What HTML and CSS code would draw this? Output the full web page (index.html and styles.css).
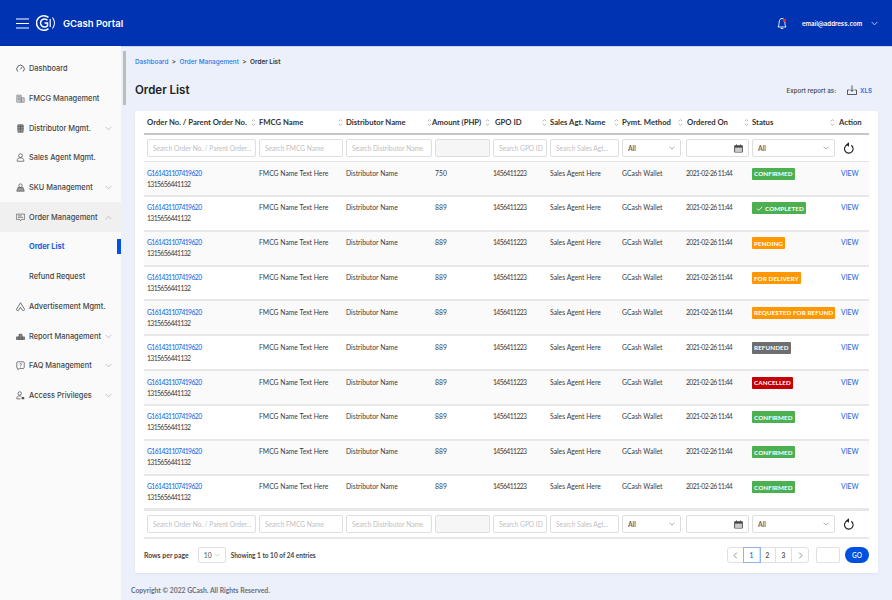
FILE: index.html
```html
<!DOCTYPE html>
<html lang="en">
<head>
<meta charset="utf-8">
<title>Order List</title>
<link rel="stylesheet" href="styles.css">
</head>
<body>
<svg class="defs" aria-hidden="true">
  <symbol id="sort" viewBox="0 0 6 10"><path d="M1 3.500 3 1.500 5 3.500M1 6.500 3 8.500 5 6.500" fill="none" stroke="#aaa" stroke-width="1"/></symbol>
  <symbol id="down" viewBox="0 0 8 5"><path d="M.7.7 4 4 7.300.7" fill="none" stroke="currentColor" stroke-width=".8"/></symbol>
  <symbol id="cal" viewBox="0 0 10 10"><path d="M1 1.500h8a.8.8 0 0 1 .8.8v6.400a.8.8 0 0 1-.8.8H1a.8.8 0 0 1-.8-.8V2.300a.8.8 0 0 1 .8-.8Z" fill="#444"/><rect x="1.200" y="4" width="7.600" height="4.800" fill="#ccc"/><path d="M2.800.5v1.500M7.200.5v1.500" stroke="#444"/></symbol>
  <symbol id="refresh" viewBox="0 0 10 12"><path d="M3.300 2.800A4.300 4.300 0 1 0 7.300 3.300" fill="none" stroke="#222" stroke-width="1.100"/><path d="M5 .3V4.700L2 2.500Z" fill="#222"/></symbol>
</svg>
<header class="topbar">
  <div class="brand">
    <svg class="burger" viewBox="0 0 13 11"><path d="M0 1h13M0 5.500h13M0 10h13" stroke="#fff" stroke-width="1.200"/></svg>
    <svg class="logo" viewBox="0 0 19 18"><path d="M12.500 3.400A7.300 7.300 0 1 0 12.500 14.600" fill="none" stroke="#fff" stroke-width="1.500"/><path d="M11.500 6.300A4 4 0 1 0 11.500 11.700V9H8.500" fill="none" stroke="#fff" stroke-width="1.500"/><path d="M14.200 5v8M16.500 3.500a9 9 0 0 1 0 11" fill="none" stroke="#fff" stroke-width="1.200"/></svg>
    <span class="brand-name">GCash Portal</span>
  </div>
  <div class="user">
    <span class="bell">
      <svg viewBox="0 0 10 13"><path d="M1 10c1-1.500 1-3 1.200-5C2.500 2.500 3.500 1.500 5 1.500S7.500 2.500 7.800 5C8 7 8 8.500 9 10ZM3.800 11.500h2.400" fill="none" stroke="#fff" stroke-width=".9"/></svg>
      <i class="bell-dot"></i>
    </span>
    <span class="email">email@address.com</span>
    <svg class="user-chev"><use href="#down"/></svg>
  </div>
</header>
<div class="shell">
  <nav class="side">
    <a class="nav"><svg viewBox="0 0 12 12"><path d="M2.300 10A5 5 0 1 1 9.700 10M6 7l2-3" fill="none" stroke="#444" stroke-width="1.100"/></svg><span>Dashboard</span></a>
    <a class="nav"><svg viewBox="0 0 12 12"><path d="M1 1.500h6V11H1ZM7 5h4v6H7ZM2.500 3.500h3M2.500 5.500h3M2.500 7.500h3" fill="#ccc" stroke="#777" stroke-width=".8"/></svg><span>FMCG Management</span></a>
    <a class="nav"><svg viewBox="0 0 12 12"><path d="M2.500 1h7v10h-7ZM1.500 3.500h9M1.500 6.500h9M6 1v10" fill="#999" stroke="#555" stroke-width=".9"/></svg><span>Distributor Mgmt.</span><svg class="chev"><use href="#down"/></svg></a>
    <a class="nav"><svg viewBox="0 0 12 12"><circle cx="6" cy="3.500" r="2.500" fill="none" stroke="#555"/><path d="M1.500 11c0-4 2-4.500 4.500-4.500s4.500.5 4.500 4.500Z" fill="none" stroke="#555"/></svg><span>Sales Agent Mgmt.</span></a>
    <a class="nav"><svg viewBox="0 0 12 12"><path d="M1 11 2.500 6h7l1.500 5Z" fill="#999" stroke="#555" stroke-width=".8"/><circle cx="6" cy="3.500" r="2.300" fill="none" stroke="#555"/></svg><span>SKU Management</span><svg class="chev"><use href="#down"/></svg></a>
    <a class="nav nav-open"><svg viewBox="0 0 12 12"><path d="M.5 1.500h11v7h-4L6 10.500 5 8.500H.5Z" fill="none" stroke="#555" stroke-width=".9"/><path d="M2.500 3.800h5M2.500 5.800h7" stroke="#555" stroke-width=".9"/></svg><span>Order Management</span><svg class="chev chev-up"><use href="#down"/></svg></a>
    <a class="nav sub sub-active"><span>Order List</span></a>
    <a class="nav sub"><span>Refund Request</span></a>
    <a class="nav"><svg viewBox="0 0 12 12"><path d="M6 1 1 9a1.500 1.500 0 0 0 2.500 2L6 7l2.500 4A1.500 1.500 0 0 0 11 9Z" fill="none" stroke="#444"/></svg><span>Advertisement Mgmt.</span></a>
    <a class="nav"><svg viewBox="0 0 12 12"><path d="M.5 10V6.500h3.500V10ZM4 10V3h4v7ZM8 10V6.500h3.500V10Z" fill="#888" stroke="#444" stroke-width=".8"/></svg><span>Report Management</span><svg class="chev"><use href="#down"/></svg></a>
    <a class="nav"><svg viewBox="0 0 12 12"><path d="M2.500 1h7A1.500 1.500 0 0 1 11 2.500v6A1.500 1.500 0 0 1 9.500 10H4.500L2.500 11.500V10A1.500 1.500 0 0 1 1 8.500v-6A1.500 1.500 0 0 1 2.500 1ZM4.800 4.300C5 2.800 7.400 3 7.200 4.500 7.100 5.500 6 5.500 6 6.500M6 7.500v1" fill="none" stroke="#444" stroke-width=".9"/></svg><span>FAQ Management</span><svg class="chev"><use href="#down"/></svg></a>
    <a class="nav"><svg viewBox="0 0 12 12"><circle cx="5" cy="3.300" r="2.300" fill="none" stroke="#555"/><path d="M1 10.500c0-3.500 2-4 4-4 1 0 1.500.1 2 .4M1 10.500h5" fill="none" stroke="#555"/><rect x="7.500" y="8" width="3.500" height="3" fill="#555"/></svg><span>Access Privileges</span><svg class="chev"><use href="#down"/></svg></a>
  </nav>
  <i class="side-scroll"></i>
  <main class="content">
    <div class="crumbs"><a>Dashboard</a><b>&gt;</b><a>Order Management</a><b>&gt;</b><span>Order List</span></div>
    <div class="title-row">
      <h1>Order List</h1>
      <div class="export">
        <span>Export report as:</span>
        <svg viewBox="0 0 11 11"><path d="M5.500 .5v6.500M3.500 5l2 2 2-2M.5 5.500v5h10v-5M2.500 5.500H.5M8.500 5.500h2" fill="none" stroke="#333" stroke-width=".9"/></svg>
        <a>XLS</a>
      </div>
    </div>
    <section class="card">
      <table class="orders">
        <colgroup><col class="c1"><col class="c2"><col class="c3"><col class="c4"><col class="c5"><col class="c6"><col class="c7"><col class="c8"><col class="c9"><col class="c10"></colgroup>
        <thead>
          <tr class="heads">
            <th><div class="th"><span>Order No. / Parent Order No.</span><svg><use href="#sort"/></svg></div></th>
            <th><div class="th"><span>FMCG Name</span><svg><use href="#sort"/></svg></div></th>
            <th><div class="th"><span>Distributor Name</span><svg><use href="#sort"/></svg></div></th>
            <th class="h-amt"><div class="th"><span>Amount (PHP)</span><svg><use href="#sort"/></svg></div></th>
            <th class="h-gpo"><div class="th"><span>GPO ID</span><svg><use href="#sort"/></svg></div></th>
            <th><div class="th"><span>Sales Agt. Name</span><svg><use href="#sort"/></svg></div></th>
            <th><div class="th"><span>Pymt. Method</span><svg><use href="#sort"/></svg></div></th>
            <th class="h-ord"><div class="th"><span>Ordered On</span><svg><use href="#sort"/></svg></div></th>
            <th><div class="th"><span>Status</span><svg><use href="#sort"/></svg></div></th>
            <th class="h-act"><span>Action</span></th>
          </tr>
          <tr class="filters">
            <td><div class="fld">Search Order No. / Parent Order...</div></td>
            <td><div class="fld">Search FMCG Name</div></td>
            <td><div class="fld">Search Distributor Name</div></td>
            <td><div class="fld fld-off"></div></td>
            <td><div class="fld">Search GPO ID</div></td>
            <td><div class="fld">Search Sales Agt...</div></td>
            <td><div class="fld fld-sel fld-pay"><span>All</span><svg><use href="#down"/></svg></div></td>
            <td><div class="fld fld-date"><svg><use href="#cal"/></svg></div></td>
            <td><div class="fld fld-sel"><span>All</span><svg><use href="#down"/></svg></div></td>
            <td class="f-act"><svg class="refresh"><use href="#refresh"/></svg></td>
          </tr>
        </thead>
        <tbody>
          <tr><td><a class="num">G161431107419620</a><br><span class="num">1315656441132</span></td><td>FMCG Name Text Here</td><td>Distributor Name</td><td>750</td><td class="num">1456411223</td><td>Sales Agent Here</td><td>GCash Wallet</td><td class="num">2021-02-26 11:44</td><td><span class="badge green">CONFIRMED</span></td><td class="view"><a>VIEW</a></td></tr>
          <tr><td><a class="num">G161431107419620</a><br><span class="num">1315656441132</span></td><td>FMCG Name Text Here</td><td>Distributor Name</td><td>889</td><td class="num">1456411223</td><td>Sales Agent Here</td><td>GCash Wallet</td><td class="num">2021-02-26 11:44</td><td><span class="badge green"><svg viewBox="0 0 8 6"><path d="M.7 3 3 5.200 7.300.8" fill="none" stroke="#fff" stroke-width="1"/></svg>COMPLETED</span></td><td class="view"><a>VIEW</a></td></tr>
          <tr><td><a class="num">G161431107419620</a><br><span class="num">1315656441132</span></td><td>FMCG Name Text Here</td><td>Distributor Name</td><td>889</td><td class="num">1456411223</td><td>Sales Agent Here</td><td>GCash Wallet</td><td class="num">2021-02-26 11:44</td><td><span class="badge orange">PENDING</span></td><td class="view"><a>VIEW</a></td></tr>
          <tr><td><a class="num">G161431107419620</a><br><span class="num">1315656441132</span></td><td>FMCG Name Text Here</td><td>Distributor Name</td><td>889</td><td class="num">1456411223</td><td>Sales Agent Here</td><td>GCash Wallet</td><td class="num">2021-02-26 11:44</td><td><span class="badge orange">FOR DELIVERY</span></td><td class="view"><a>VIEW</a></td></tr>
          <tr><td><a class="num">G161431107419620</a><br><span class="num">1315656441132</span></td><td>FMCG Name Text Here</td><td>Distributor Name</td><td>889</td><td class="num">1456411223</td><td>Sales Agent Here</td><td>GCash Wallet</td><td class="num">2021-02-26 11:44</td><td><span class="badge orange">REQUESTED FOR REFUND</span></td><td class="view"><a>VIEW</a></td></tr>
          <tr><td><a class="num">G161431107419620</a><br><span class="num">1315656441132</span></td><td>FMCG Name Text Here</td><td>Distributor Name</td><td>889</td><td class="num">1456411223</td><td>Sales Agent Here</td><td>GCash Wallet</td><td class="num">2021-02-26 11:44</td><td><span class="badge gray">REFUNDED</span></td><td class="view"><a>VIEW</a></td></tr>
          <tr><td><a class="num">G161431107419620</a><br><span class="num">1315656441132</span></td><td>FMCG Name Text Here</td><td>Distributor Name</td><td>889</td><td class="num">1456411223</td><td>Sales Agent Here</td><td>GCash Wallet</td><td class="num">2021-02-26 11:44</td><td><span class="badge red">CANCELLED</span></td><td class="view"><a>VIEW</a></td></tr>
          <tr><td><a class="num">G161431107419620</a><br><span class="num">1315656441132</span></td><td>FMCG Name Text Here</td><td>Distributor Name</td><td>889</td><td class="num">1456411223</td><td>Sales Agent Here</td><td>GCash Wallet</td><td class="num">2021-02-26 11:44</td><td><span class="badge green">CONFIRMED</span></td><td class="view"><a>VIEW</a></td></tr>
          <tr><td><a class="num">G161431107419620</a><br><span class="num">1315656441132</span></td><td>FMCG Name Text Here</td><td>Distributor Name</td><td>889</td><td class="num">1456411223</td><td>Sales Agent Here</td><td>GCash Wallet</td><td class="num">2021-02-26 11:44</td><td><span class="badge green">CONFIRMED</span></td><td class="view"><a>VIEW</a></td></tr>
          <tr><td><a class="num">G161431107419620</a><br><span class="num">1315656441132</span></td><td>FMCG Name Text Here</td><td>Distributor Name</td><td>889</td><td class="num">1456411223</td><td>Sales Agent Here</td><td>GCash Wallet</td><td class="num">2021-02-26 11:44</td><td><span class="badge green">CONFIRMED</span></td><td class="view"><a>VIEW</a></td></tr>
        </tbody>
        <tfoot>
          <tr class="filters foot">
            <td><div class="fld">Search Order No. / Parent Order...</div></td>
            <td><div class="fld">Search FMCG Name</div></td>
            <td><div class="fld">Search Distributor Name</div></td>
            <td><div class="fld fld-off"></div></td>
            <td><div class="fld">Search GPO ID</div></td>
            <td><div class="fld">Search Sales Agt...</div></td>
            <td><div class="fld fld-sel fld-pay"><span>All</span><svg><use href="#down"/></svg></div></td>
            <td><div class="fld fld-date"><svg><use href="#cal"/></svg></div></td>
            <td><div class="fld fld-sel"><span>All</span><svg><use href="#down"/></svg></div></td>
            <td class="f-act"><svg class="refresh"><use href="#refresh"/></svg></td>
          </tr>
        </tfoot>
      </table>
      <div class="pager">
        <div class="pager-left">
          <span class="rpp">Rows per page</span>
          <div class="rpp-sel"><span>10</span><svg><use href="#down"/></svg></div>
          <span class="count">Showing 1 to 10 of 24 entries</span>
        </div>
        <div class="pager-right">
          <div class="pages">
            <span class="pg"><svg viewBox="0 0 5 8"><path d="M4 .7.8 4 4 7.300" fill="none" stroke="#777" stroke-width=".9"/></svg></span>
            <span class="pg pg-on">1</span><span class="pg">2</span><span class="pg">3</span>
            <span class="pg"><svg viewBox="0 0 5 8"><path d="M1 .7 4.200 4 1 7.300" fill="none" stroke="#777" stroke-width=".9"/></svg></span>
          </div>
          <div class="jump"></div>
          <button class="go">GO</button>
        </div>
      </div>
    </section>
    <footer class="copy">Copyright © 2022 GCash. All Rights Reserved.</footer>
  </main>
</div>
</body>
</html>
```
FILE: styles.css
```css
* { box-sizing: border-box; }
html, body { margin: 0; height: 600px; overflow: hidden; }
body { font-family: "Lato", "Liberation Sans", sans-serif; font-size: 7px; color: #3a3a3a; background: #ebf0fa; }
.defs { display: none; }
a { color: #1f6fe5; }

.topbar { height: 46px; background: #0033b1; display: flex; justify-content: space-between; align-items: center; padding: 0 14px 0 16px; color: #fff; box-shadow: 0 1px 0 #c8d4f0; position: relative; }
.brand { display: flex; align-items: center; }
.burger { width: 13px; height: 11px; margin-right: 7px; }
.logo { width: 19px; height: 18px; margin-right: 8px; }
.brand-name { font: 600 9.5px "Inter", sans-serif; }
.user { display: flex; align-items: center; }
.bell { position: relative; width: 10px; height: 13px; margin-right: 15px; }
.bell svg { width: 10px; height: 13px; display: block; }
.bell-dot { position: absolute; top: 2px; right: 1px; width: 3px; height: 3px; background: #f22; }
.email { font: 600 6.1px "Inter", sans-serif; width: 69px; }
.user-chev { width: 7px; height: 5px; color: #fff; }

.shell { display: flex; height: 554px; position: relative; }
.side { width: 121px; flex: none; background: #fafafa; padding-top: 8px; }
.nav { display: flex; align-items: center; height: 29.7px; padding: 0 9px 0 16px; font: 500 7.4px "Inter", sans-serif; color: #444; }
.nav > svg:first-child { width: 9px; height: 9px; margin-right: 4px; flex: none; }
.nav span { flex: 1; white-space: nowrap; }
.chev { width: 7px; height: 5px; color: #aaa; flex: none; }
.chev-up { transform: rotate(180deg); }
.nav-open { background: #f0f0f0; }
.sub { padding-left: 29px; }
.sub-active { color: #1560e0; font-weight: 700; position: relative; }
.sub-active::after { content: ""; position: absolute; right: 0; top: 7px; width: 4px; height: 15px; background: #0052e6; }
.side-scroll { position: absolute; left: 122.5px; top: 4.500px; width: 3px; height: 54px; background: #bdbdbd; }

.content { flex: 1; min-width: 0; padding: 11px 14px 0; }
.crumbs { display: flex; align-items: center; height: 9px; font: 500 6.4px "Inter", sans-serif; }
.crumbs a { color: #2b78ea; }
.crumbs b { font-weight: 500; margin: 0 3.5px; }
.crumbs span { color: #333; font-weight: 600; }
.title-row { display: flex; justify-content: space-between; align-items: center; height: 20px; margin-top: 14px; padding-right: 6px; }
h1 { margin: 0; font: 600 11.5px "Inter", sans-serif; color: #222; }
.export { display: flex; align-items: center; font: 500 6.2px "Inter", sans-serif; color: #444; }
.export svg { width: 10px; height: 10px; margin: 0 3px 0 11px; }
.export a { font-weight: 600; }

.card { margin-top: 11px; height: 462px; background: #fff; padding: 0 9px; border-radius: 2px; box-shadow: 0 1px 2px rgba(40,60,120,.08); }
.orders { width: 725px; table-layout: fixed; border-collapse: separate; border-spacing: 0; }
.c1 { width: 112px; } .c2 { width: 87px; } .c3 { width: 89px; } .c4 { width: 58px; } .c5 { width: 57px; }
.c6 { width: 72px; } .c7 { width: 64px; } .c8 { width: 66px; } .c9 { width: 86px; } .c10 { width: 34px; }
.heads th { height: 24px; padding: 0 0 0 3px; border-bottom: 2px solid #c6c6c6; text-align: left; font-weight: 700; font-size: 7.7px; color: #333; white-space: nowrap; }
.th { display: flex; justify-content: space-between; align-items: center; }
.th svg { width: 5px; height: 9px; flex: none; margin-right: .5px; }
.h-amt { padding-left: 0 !important; }
.h-gpo { padding-left: 5px !important; }
.h-ord { padding-left: 4px !important; }
.h-act { padding-left: 4px !important; }
.filters td { height: 27px; padding: 0 0 0 3px; border-bottom: 1px solid #e4e4e4; vertical-align: middle; }
.foot td { border-top: 1px solid #e4e4e4; border-bottom: 2px solid #e8e8e8; height: 29px; }
.fld { height: 18px; border: 1px solid #dedede; border-radius: 2px; background: #fff; padding: 0 5px; display: flex; align-items: center; justify-content: space-between; font-size: 6.6px; color: #c0c0c0; white-space: nowrap; overflow: hidden; }
.fld-off { background: #f6f6f6; }
.fld-sel span { color: #666; font-weight: 700; }
.fld-sel svg { width: 6px; height: 4px; color: #777; }
.fld-pay { margin-right: 2px; }
.fld-date { justify-content: flex-end; }
.fld-date svg { width: 9px; height: 9px; }
.refresh { width: 10px; height: 12px; display: block; margin-left: 6px; }

tbody td { height: 34.85px; padding: 5.5px 0 0 3px; border-bottom: 2px solid #e8e8e8; vertical-align: top; line-height: 11px; font-size: 6.8px; color: #3c3c3c; white-space: nowrap; overflow: visible; }
tbody tr:nth-child(odd) td { background: #fafafa; }
tbody a { font-weight: 500; }
.num { letter-spacing: -.6px; font-size: 6.8px; }
.view { font-weight: 700; padding-left: 6px !important; }
.badge { display: inline-flex; align-items: center; height: 12px; padding: 0 2px; border-radius: 1px; color: #fff; font-weight: 700; font-size: 6.3px; letter-spacing: .08px; vertical-align: top; }
.badge svg { width: 7px; height: 5px; margin: 0 2px; }
.green { background: #4caf50; }
.orange { background: #ff9800; }
.gray { background: #6e6e6e; }
.red { background: #c40000; }

.pager { display: flex; justify-content: space-between; align-items: center; padding-top: 8px; }
.pager-left { display: flex; align-items: center; font-weight: 700; font-size: 6.9px; color: #444; }
.count { font-size: 6.5px; }
.rpp-sel { width: 28px; height: 16px; margin: 0 5px 0 9px; border: 1px solid #e0e0e0; border-radius: 2px; padding: 0 5px; display: flex; align-items: center; justify-content: space-between; font-weight: 500; color: #666; }
.rpp-sel svg { width: 6px; height: 4px; color: #bbb; }
.pager-right { display: flex; align-items: center; }
.pages { display: flex; border: 1px solid #e0e0e0; border-radius: 3px; height: 16px; }
.pg { width: 16px; display: flex; align-items: center; justify-content: center; border-right: 1px solid #e0e0e0; font-weight: 700; font-size: 6.5px; color: #555; }
.pg:last-child { border-right: 0; }
.pg svg { width: 5px; height: 7px; }
.pg-on { color: #2b78ea; outline: 1px solid #8db6f5; }
.jump { width: 24px; height: 16px; margin: 0 5px 0 7px; border: 1px solid #e0e0e0; border-radius: 2px; }
.go { width: 24px; height: 16px; border: 0; border-radius: 8px; background: #0050e0; color: #dfe9ff; padding: 0; font: 700 6.5px "Lato", sans-serif; }
.copy { margin: 13px 0 0 -4px; font-weight: 700; font-size: 6.8px; color: #6a6f7c; }
```
